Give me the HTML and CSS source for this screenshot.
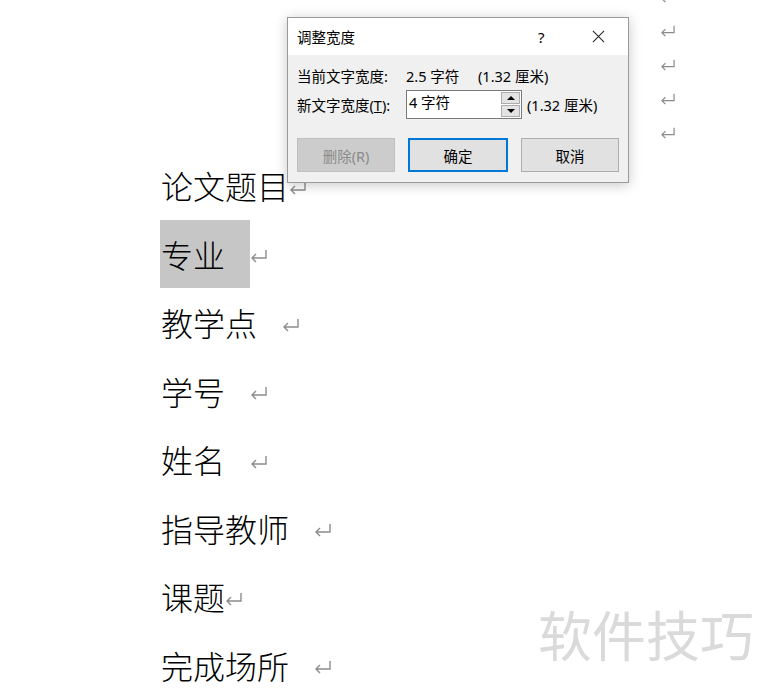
FILE: index.html
```html
<!DOCTYPE html>
<html lang="zh-CN">
  <head>
    <meta charset="UTF-8" />
    <meta name="viewport" content="width=device-width, initial-scale=1.0" />
    <title>调整宽度</title>
    <link rel="stylesheet" href="styles.css">
  </head>
  <body>
    <div class="page">
      <!-- paragraph marks of the lines on the right, mostly under the dialog -->
      <div class="marks">
        <div class="mark-row"><svg class="ret small" viewBox="0 0 18 15"><path d="M16 2 V10 H2 M6 6 L2 10 L6 14" /></svg></div>
        <div class="mark-row"><svg class="ret small" viewBox="0 0 18 15"><path d="M16 2 V10 H2 M6 6 L2 10 L6 14" /></svg></div>
        <div class="mark-row"><svg class="ret small" viewBox="0 0 18 15"><path d="M16 2 V10 H2 M6 6 L2 10 L6 14" /></svg></div>
        <div class="mark-row"><svg class="ret small" viewBox="0 0 18 15"><path d="M16 2 V10 H2 M6 6 L2 10 L6 14" /></svg></div>
        <div class="mark-row"><svg class="ret small" viewBox="0 0 18 15"><path d="M16 2 V10 H2 M6 6 L2 10 L6 14" /></svg></div>
      </div>

      <div class="lines">
        <div class="line">
          <span class="word">论文题目</span>
          <svg class="ret" viewBox="0 0 18 15"><path d="M16 2 V10 H2 M6 6 L2 10 L6 14" /></svg>
        </div>
        <div class="line">
          <span class="word spaced selected">专业</span>
          <svg class="ret" viewBox="0 0 18 15"><path d="M16 2 V10 H2 M6 6 L2 10 L6 14" /></svg>
        </div>
        <div class="line">
          <span class="word spaced">教学点</span>
          <svg class="ret" viewBox="0 0 18 15"><path d="M16 2 V10 H2 M6 6 L2 10 L6 14" /></svg>
        </div>
        <div class="line">
          <span class="word spaced">学号</span>
          <svg class="ret" viewBox="0 0 18 15"><path d="M16 2 V10 H2 M6 6 L2 10 L6 14" /></svg>
        </div>
        <div class="line">
          <span class="word spaced">姓名</span>
          <svg class="ret" viewBox="0 0 18 15"><path d="M16 2 V10 H2 M6 6 L2 10 L6 14" /></svg>
        </div>
        <div class="line">
          <span class="word spaced">指导教师</span>
          <svg class="ret" viewBox="0 0 18 15"><path d="M16 2 V10 H2 M6 6 L2 10 L6 14" /></svg>
        </div>
        <div class="line">
          <span class="word">课题</span>
          <svg class="ret" viewBox="0 0 18 15"><path d="M16 2 V10 H2 M6 6 L2 10 L6 14" /></svg>
        </div>
        <div class="line">
          <span class="word spaced">完成场所</span>
          <svg class="ret" viewBox="0 0 18 15"><path d="M16 2 V10 H2 M6 6 L2 10 L6 14" /></svg>
        </div>
      </div>

      <div class="watermark">软件技巧</div>

      <div class="dialog">
        <div class="dialog-title">
          <span class="title-text">调整宽度</span>
          <span class="help">?</span>
          <svg class="close" viewBox="0 0 14 14"><path d="M1 1 L13 13 M13 1 L1 13" /></svg>
        </div>
        <div class="dialog-body">
          <div class="field">
            <span class="label">当前文字宽度:</span>
            <span class="value">2.5 字符</span>
            <span class="unit">(1.32 厘米)</span>
          </div>
          <div class="field">
            <span class="label">新文字宽度(<u>T</u>):</span>
            <div class="spin">
              <span class="spin-text">4 字符</span>
              <div class="spin-btns">
                <div class="spin-btn"><span class="tri up"></span></div>
                <div class="spin-btn"><span class="tri down"></span></div>
              </div>
            </div>
            <span class="unit">(1.32 厘米)</span>
          </div>
          <div class="buttons">
            <button class="btn disabled">删除(R)</button>
            <button class="btn default">确定</button>
            <button class="btn">取消</button>
          </div>
        </div>
      </div>
    </div>
  </body>
</html>
```

FILE: styles.css
```css
body {
  margin: 0;
  background-color: white;
  font-family: "Noto Sans", "Noto Sans CJK SC", sans-serif;
  overflow: hidden;
}
.page {
  position: relative;
  width: 760px;
  height: 691px;
  overflow: hidden;
}
.marks {
  margin-top: -21px;
  padding-left: 660px;
}
.mark-row {
  height: 34px;
  display: flex;
  align-items: center;
}
.ret {
  width: 18px;
  height: 15px;
  fill: none;
  stroke: #8c8c8c;
  stroke-width: 1.4;
  flex-shrink: 0;
}
.ret.small {
  width: 16px;
  height: 13px;
}
.lines {
  margin-top: 2px;
  padding-left: 160px;
}
.line {
  height: 68.5px;
  display: flex;
  align-items: center;
  font-family: "Noto Sans CJK SC", sans-serif;
  font-weight: 300;
  font-size: 32px;
  color: #000;
}
.word {
  padding-left: 1px;
  height: 100%;
  display: flex;
  align-items: center;
}
.spaced {
  padding-right: 25px;
}
.selected {
  background-color: #c6c6c6;
}
.line .ret {
  margin-top: 4px;
}
.watermark {
  position: absolute;
  left: 538px;
  top: 605px;
  font-family: "Noto Sans CJK SC", sans-serif;
  font-size: 54px;
  line-height: 58px;
  color: #dadada;
}
.dialog {
  position: absolute;
  left: 287px;
  top: 17px;
  width: 340px;
  height: 164px;
  border: 1px solid #9a9a9a;
  background-color: #f0f0f0;
  box-shadow: 0 2px 12px rgba(0, 0, 0, 0.22);
  font-family: "Noto Sans", "Noto Sans CJK SC", sans-serif;
  font-size: 14.5px;
  color: #000;
}
.dialog-title {
  height: 37px;
  background-color: white;
  display: flex;
  align-items: center;
  padding-left: 9px;
}
.title-text {
  flex: 1;
}
.help {
  width: 14px;
  margin-right: 40px;
  font-size: 15px;
}
.close {
  width: 13px;
  height: 13px;
  margin-right: 23px;
  fill: none;
  stroke: #222;
  stroke-width: 1.1;
}
.dialog-body {
  padding: 8px 9px 0 9px;
}
.field {
  display: flex;
  align-items: center;
  height: 24px;
}
.field + .field {
  margin-top: 3px;
  height: 29px;
}
.label {
  width: 109px;
  white-space: nowrap;
}
.value {
  width: 72px;
}
.spin {
  width: 114px;
  height: 27px;
  border: 1px solid #7a7a7a;
  background-color: white;
  display: flex;
  justify-content: space-between;
  margin-right: 5px;
}
.spin-text {
  padding-left: 2px;
  line-height: 22px;
}
.spin-btns {
  display: flex;
  flex-direction: column;
  gap: 1px;
  padding: 1px;
}
.spin-btn {
  width: 17px;
  flex: 1;
  background-color: #e3e3e3;
  border: 1px solid #adadad;
  display: flex;
  align-items: center;
  justify-content: center;
}
.tri {
  width: 0;
  height: 0;
  border-left: 4px solid transparent;
  border-right: 4px solid transparent;
}
.tri.up {
  border-bottom: 4px solid #000;
}
.tri.down {
  border-top: 4px solid #000;
}
.buttons {
  display: flex;
  gap: 13px;
  margin-top: 19px;
}
.btn {
  width: 98px;
  height: 34px;
  background-color: #e1e1e1;
  border: 1px solid #adadad;
  font-family: "Noto Sans", "Noto Sans CJK SC", sans-serif;
  font-size: 14.5px;
  color: #000;
  padding: 0;
}
.btn.default {
  width: 100px;
  border: 2px solid #0078d7;
}
.btn.disabled {
  background-color: #cccccc;
  border-color: #bfbfbf;
  color: #8a8a8a;
}
```
